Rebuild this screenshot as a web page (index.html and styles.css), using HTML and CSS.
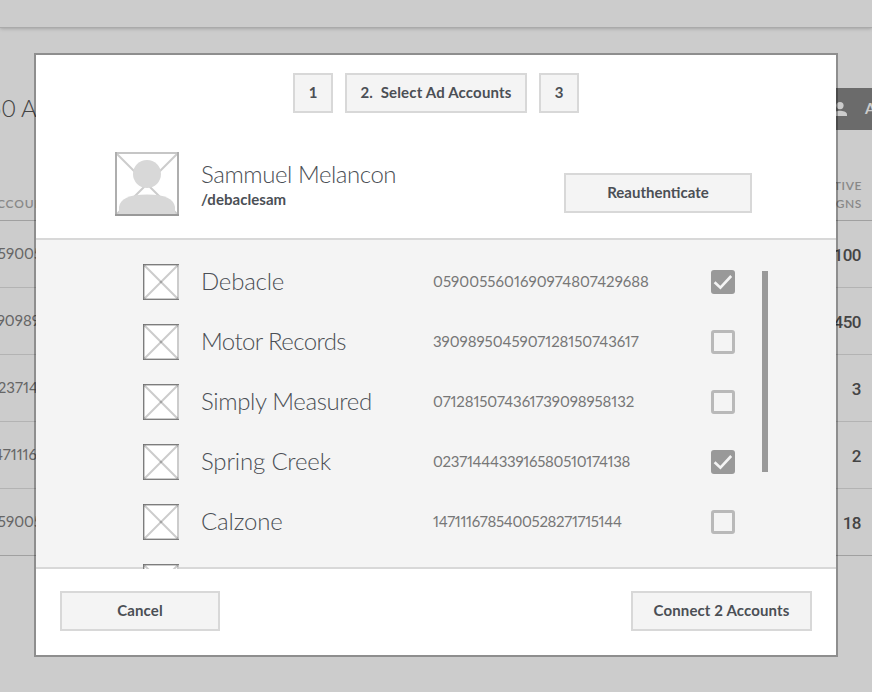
FILE: index.html
```html
<!DOCTYPE html>
<html lang="en">
<head>
<meta charset="utf-8">
<title>Select Ad Accounts</title>
<link rel="stylesheet" href="styles.css">
</head>
<body>
<svg class="defs" width="0" height="0">
  <symbol id="placeholder" viewBox="0 0 36 36">
    <rect width="36" height="36" fill="#fff"/>
    <path d="M1 1L35 35M35 1L1 35" stroke="#000" stroke-opacity=".2" stroke-width="2"/>
    <circle cx="18" cy="18" r="1.3" fill="#000" fill-opacity=".2"/>
    <path d="M0 .5H36M0 35.5H36M.5 0V36" stroke="#8c8c8c" stroke-opacity=".85" stroke-width="1"/>
    <path d="M0 1H36M0 35H36M1 0V36M35 0V36" stroke="#000" stroke-opacity=".2" stroke-width="2"/>
  </symbol>
  <symbol id="check" viewBox="0 0 24 24">
    <path d="M3.6 12.2L9.4 17.6L20.2 6" fill="none" stroke="#f4f4f4" stroke-width="2.6"/>
  </symbol>
</svg>
<div class="page">
  <header class="topbar"></header>
  <div class="toolbar">
    <h1 class="title">50 Accounts</h1>
    <div class="account-button">
      <svg width="16" height="14" viewBox="0 0 16 14"><circle cx="8" cy="3.6" r="3.6"/><path d="M1 14V12.4C1 9.8 5.5 8.8 8 8.8S15 9.8 15 12.4V14Z"/></svg>
      <span>Add</span>
    </div>
  </div>
  <div class="table">
    <div class="tr th"><span>ACCOUNT</span><span class="last">ACTIVE<br>CAMPAIGNS</span></div>
    <div class="tr"><span>059005</span><b>100</b></div>
    <div class="tr"><span>390989</span><b>450</b></div>
    <div class="tr"><span>023714</span><b>3</b></div>
    <div class="tr"><span>1471116785</span><b>2</b></div>
    <div class="tr"><span>059005</span><b>18</b></div>
  </div>
</div>
<main class="modal">
  <section class="head">
    <nav class="steps">
      <div class="btn step">1</div>
      <div class="btn current">2.&nbsp; Select Ad Accounts</div>
      <div class="btn step">3</div>
    </nav>
    <div class="profile">
      <svg width="64" height="64" viewBox="0 0 64 64">
        <path d="M1 1L63 63M63 1L1 63" stroke="#ccc" stroke-width="2"/>
        <circle cx="32" cy="22" r="14" fill="#d8d8d8"/>
        <path d="M4 64V55C5 47 14 42.5 32 42.5S59 47 60 55V64Z" fill="#d8d8d8"/>
        <path d="M0 1H64" stroke="#c6c6c6" stroke-width="2"/>
        <path d="M1 0V64M63 0V64" stroke="#aeaeae" stroke-width="2"/>
        <path d="M0 63H64" stroke="#999" stroke-width="2"/>
      </svg>
      <div class="who"><h2>Sammuel Melancon</h2><p>/debaclesam</p></div>
      <div class="btn reauth">Reauthenticate</div>
    </div>
  </section>
  <section class="list">
    <div class="rows">
      <div class="row"><svg class="thumb"><use href="#placeholder"/></svg><span class="name n1">Debacle</span><span class="id i1">0590055601690974807429688</span><i class="box on"><svg width="24" height="24"><use href="#check"/></svg></i></div>
      <div class="row"><svg class="thumb"><use href="#placeholder"/></svg><span class="name n2">Motor Records</span><span class="id i2">3909895045907128150743617</span><i class="box"></i></div>
      <div class="row"><svg class="thumb"><use href="#placeholder"/></svg><span class="name n3">Simply Measured</span><span class="id i3">0712815074361739098958132</span><i class="box"></i></div>
      <div class="row"><svg class="thumb"><use href="#placeholder"/></svg><span class="name n4">Spring Creek</span><span class="id i4">0237144433916580510174138</span><i class="box on"><svg width="24" height="24"><use href="#check"/></svg></i></div>
      <div class="row"><svg class="thumb"><use href="#placeholder"/></svg><span class="name n5">Calzone</span><span class="id i5">1471116785400528271715144</span><i class="box"></i></div>
      <div class="row"><svg class="thumb"><use href="#placeholder"/></svg></div>
    </div>
    <div class="scrollbar"></div>
  </section>
  <footer class="foot">
    <div class="btn cancel">Cancel</div>
    <div class="btn connect">Connect 2 Accounts</div>
  </footer>
</main>
</body>
</html>
```
FILE: styles.css
```css
* { box-sizing: border-box; }
body { margin: 0; width: 872px; height: 692px; overflow: hidden; position: relative; background: #ccc; color: #4b4f55; font-family: Lato, sans-serif; }
h1, h2, p { margin: 0; }
.defs { position: absolute; }

.page { height: 692px; overflow: hidden; color: #444; }
.topbar { height: 27px; box-shadow: 0 1px 0 #aaa, 0 1px 4px rgba(0,0,0,.3); }
.toolbar { height: 103px; padding-top: 61px; display: flex; justify-content: space-between; }
.title { margin-left: -12px; font-size: 24px; line-height: 40px; font-weight: 300; letter-spacing: -.2px; }
.account-button { width: 60px; height: 42px; background: #6b6b6b; color: #ccc; display: flex; align-items: center; padding-left: 20px; font-size: 15px; font-weight: 700; }
.account-button svg { fill: #ccc; flex: none; }
.account-button span { margin-left: 17px; line-height: 20px; padding-bottom: 2px; }
.tr { height: 67px; border-bottom: 1px solid #b3b3b3; display: flex; justify-content: space-between; padding-right: 11px; line-height: 64px; font-size: 15px; color: #666; font-feature-settings: "pnum"; }
.tr span { margin-left: -12px; }
.tr b { font: 500 17px/68px Roboto, sans-serif; letter-spacing: -.5px; color: #444; }
.tr.th { height: 91px; border-color: #a0a0a0; font-size: 12px; line-height: 18px; letter-spacing: .9px; color: #888; align-items: flex-end; padding-bottom: 7px; font-weight: 600; padding-right: 10px; }
.tr.th .last { text-align: right; letter-spacing: .6px; }
.tr:last-child { border-color: #a0a0a0; }

.modal { position: absolute; left: 34px; top: 53px; width: 804px; height: 604px; border: 2px solid rgba(0,0,0,.3); background: #fff; background-clip: padding-box; }
.btn { height: 40px; border: 2px solid #d8d8d8; background: #f4f4f4; line-height: 35px; text-align: center; font-size: 15px; font-weight: 700; }
.head { height: 183px; padding-top: 18px; }
.steps { display: flex; justify-content: center; gap: 12px; }
.step { width: 40px; }
.current { width: 182px; letter-spacing: .17px; }
.profile { display: flex; margin: 39px 84px 0 79px; }
.who { margin-left: 22px; flex: 1; }
.who h2 { font-size: 24px; line-height: 30px; padding-top: 7px; font-weight: 300; letter-spacing: -.44px; }
.who p { font-size: 15px; line-height: 20px; font-weight: 700; letter-spacing: .05px; }
.reauth { width: 188px; margin-top: 21px; }
.list { height: 331px; overflow: hidden; display: flex; background: #f4f4f4; box-shadow: inset 0 2px #d8d8d8, inset 0 -2px #d8d8d8; padding-top: 14px; }
.rows { width: 726px; }
.row { height: 60px; display: grid; grid-template-columns: 58px 232px 278px 24px; padding-left: 107px; align-items: center; }
.thumb { width: 36px; height: 36px; display: block; }
.name { font-size: 24px; line-height: 58px; padding-bottom: 2px; font-weight: 300; }
.n1 { letter-spacing: -.2px; }
.n2 { letter-spacing: -.6px; }
.n3 { letter-spacing: -.37px; }
.n4 { letter-spacing: -.17px; }
.n5 { letter-spacing: -.15px; }
.id { font-size: 15px; line-height: 56px; padding-bottom: 2px; color: #777; font-feature-settings: "pnum"; }
.i1 { letter-spacing: .04px; }
.i2 { letter-spacing: -.05px; }
.i3 { letter-spacing: -.1px; }
.i4 { letter-spacing: -.27px; }
.i5 { letter-spacing: -.3px; }
.box { width: 24px; height: 24px; border: 3px solid #b9b9b9; border-radius: 3px; display: block; }
.box.on { border: 0; background: #999; }
.box svg { display: block; }
.scrollbar { width: 6px; height: 201px; margin-top: 19px; background: #999; }
.foot { height: 86px; padding: 22px 24px; display: flex; justify-content: space-between; }
.cancel { width: 160px; letter-spacing: .15px; }
.connect { width: 181px; letter-spacing: .12px; }
```
